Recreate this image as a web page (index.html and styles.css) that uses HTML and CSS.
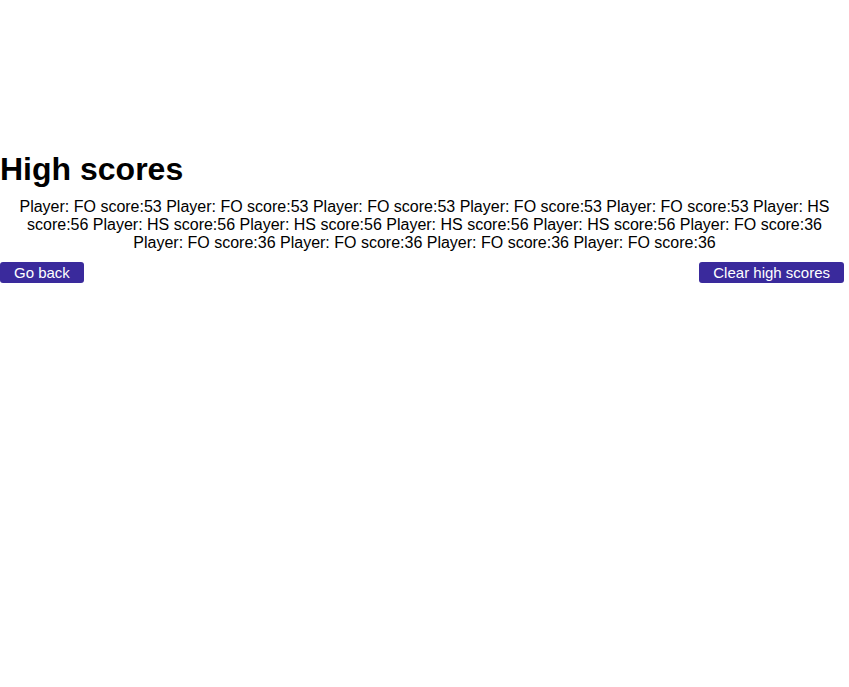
FILE: index.html
```html
<!DOCTYPE html>
<html>
<head>
<meta charset="utf-8">
<link rel="stylesheet" href="styles.css">
</head>
<body>
<main class="page">
  <h1 class="title">High scores</h1>
  <p class="scores">Player: FO score:53 Player: FO score:53 Player: FO score:53 Player: FO score:53 Player: FO score:53 Player: HS score:56 Player: HS score:56 Player: HS score:56 Player: HS score:56 Player: HS score:56 Player: FO score:36 Player: FO score:36 Player: FO score:36 Player: FO score:36 Player: FO score:36</p>
  <div class="actions">
    <button class="btn">Go back</button>
    <button class="btn">Clear high scores</button>
  </div>
</main>
</body>
</html>
```
FILE: styles.css
```css
html, body {
  margin: 0;
  padding: 0;
  background: #fff;
}
body {
  font-family: "Liberation Sans", Arial, sans-serif;
  color: #000;
}
.page {
  padding-top: 151px;
}
.title {
  margin: 0;
  font-size: 32px;
  font-weight: bold;
  line-height: 36px;
}
.scores {
  margin: 11px 0 0;
  font-size: 16px;
  line-height: 18px;
  text-align: center;
}
.actions {
  display: flex;
  justify-content: space-between;
  padding-right: 5px;
  margin-top: 10px;
}
.btn {
  font-family: "Liberation Sans", Arial, sans-serif;
  font-size: 15px;
  line-height: 20px;
  height: 21px;
  padding: 0 14px;
  border: none;
  border-radius: 3px;
  background: #3a2a9c;
  color: #fff;
}
```
